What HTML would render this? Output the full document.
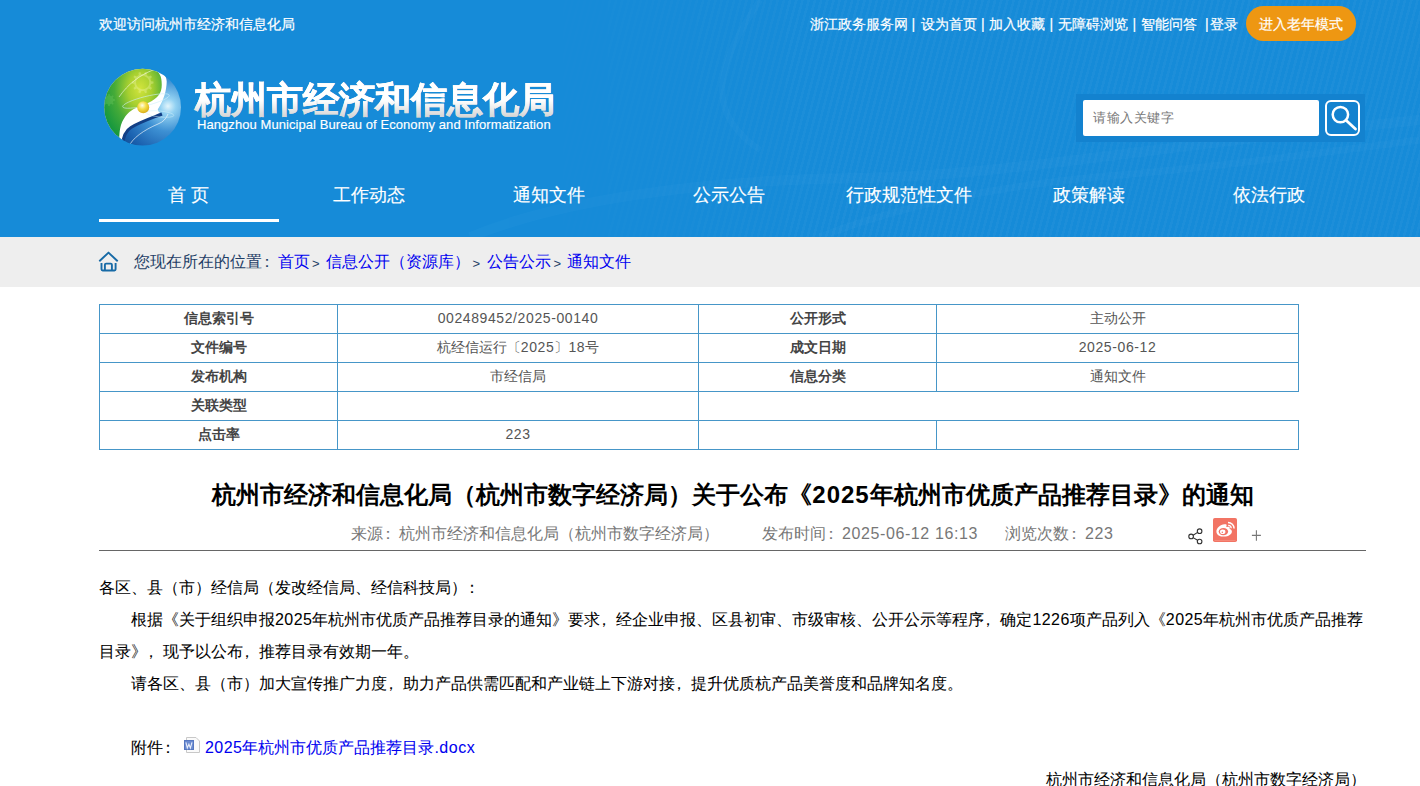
<!DOCTYPE html>
<html><head><meta charset="utf-8">
<style>
html,body{margin:0;padding:0;}
body{width:1420px;height:786px;overflow:hidden;position:relative;background:#fff;font-family:"Liberation Sans",sans-serif;color:#333;}
.a{position:absolute;white-space:nowrap;}
#hd{position:absolute;left:0;top:0;width:1420px;height:237px;background:#168bd8;overflow:hidden;}
.tl{position:absolute;white-space:nowrap;font-size:14px;color:#fff;line-height:20px;top:14px;-webkit-text-stroke:0.2px #fff;}
.nav{position:absolute;top:182px;width:180px;text-align:center;font-size:18px;line-height:26px;color:#fff;-webkit-text-stroke:0.15px #fff;}
#bc{position:absolute;left:0;top:237px;width:1420px;height:50px;background:#eeeeee;}
.bct{position:absolute;white-space:nowrap;font-size:16px;line-height:22px;color:#1f3e66;top:251px;}
.lk{color:#0000f0;}
.info{position:absolute;left:0;top:0;}
.hl{position:absolute;height:1px;background:#4696c8;}
.vl{position:absolute;width:1px;background:#4696c8;}
.cl{position:absolute;white-space:nowrap;font-size:14px;line-height:20px;font-weight:bold;color:#444;text-align:center;}
.cv{position:absolute;white-space:nowrap;font-size:14px;line-height:20px;color:#555;text-align:center;}
.d14{letter-spacing:0.6px;}
.d16{letter-spacing:0.45px;}
.m16{letter-spacing:0.6px;}
.meta{position:absolute;white-space:nowrap;font-size:16px;line-height:22px;color:#777;top:523px;}
.p{position:absolute;white-space:nowrap;font-size:16px;line-height:22px;color:#000;-webkit-text-stroke:0.05px currentColor;}
.cm{position:relative;left:-4px;}
.co{position:relative;left:-3.5px;}
</style></head><body>
<div id="hd">
  <div class="a" style="left:0;top:0;width:1420px;height:237px;background:repeating-linear-gradient(105deg,rgba(255,255,255,0.03) 0px,rgba(255,255,255,0.03) 2.5px,rgba(255,255,255,0) 2.5px,rgba(255,255,255,0) 6px);-webkit-mask-image:linear-gradient(90deg,transparent 0%,transparent 35%,#000 60%,#000 100%);"></div>
  <svg class="a" style="left:0;top:0;" width="1420" height="237" viewBox="0 0 1420 237">
    <g fill="none" stroke="#7cc6f5" opacity="0.045">
      <path d="M470 237 C560 200 700 180 860 178 C1000 176 1120 150 1420 120" stroke-width="10"/>
      <path d="M820 237 C900 205 1000 185 1120 175 C1240 165 1340 150 1420 140" stroke-width="7"/>
      <path d="M760 0 C720 60 700 110 760 150" stroke-width="6"/>
    </g>
  </svg>
  <div class="tl" id="wel" style="left:99px;">欢迎访问杭州市经济和信息化局</div>
  <div class="tl" id="t1" style="left:810px;">浙江政务服务网</div>
  <div class="tl" id="s1" style="left:911.5px;">|</div>
  <div class="tl" id="t2" style="left:921px;">设为首页</div>
  <div class="tl" id="s2" style="left:981px;">|</div>
  <div class="tl" id="t3" style="left:989px;">加入收藏</div>
  <div class="tl" id="s3" style="left:1049.5px;">|</div>
  <div class="tl" id="t4" style="left:1058px;">无障碍浏览</div>
  <div class="tl" id="s4" style="left:1132.5px;">|</div>
  <div class="tl" id="t5" style="left:1141px;">智能问答</div>
  <div class="tl" id="s5" style="left:1205px;">|</div>
  <div class="tl" id="t6" style="left:1210px;">登录</div>
  <div class="a" style="left:1246px;top:6px;width:110px;height:35px;border-radius:18px;background:#ee9712;"></div>
  <div class="tl" id="old" style="left:1259px;top:14px;">进入老年模式</div>

  <svg class="a" style="left:100px;top:64px;" width="86" height="86" viewBox="0 0 86 86">
    <defs>
      <radialGradient id="gG" cx="0.66" cy="0.3" r="0.62">
        <stop offset="0" stop-color="#d2e43c"/><stop offset="0.3" stop-color="#a8d030"/><stop offset="0.65" stop-color="#46ab38"/><stop offset="1" stop-color="#17983e"/>
      </radialGradient>
      <radialGradient id="gB" cx="0.79" cy="0.49" r="0.7">
        <stop offset="0" stop-color="#e2f5fc"/><stop offset="0.13" stop-color="#92d1f2"/><stop offset="0.42" stop-color="#3d90d3"/><stop offset="0.78" stop-color="#1b62b0"/><stop offset="1" stop-color="#0f4a92"/>
      </radialGradient>
      <radialGradient id="gY" cx="0.42" cy="0.35" r="0.7">
        <stop offset="0" stop-color="#fffde6"/><stop offset="0.45" stop-color="#f5df48"/><stop offset="1" stop-color="#d6a614"/>
      </radialGradient>
      <clipPath id="cc"><circle cx="42.6" cy="43.2" r="38.4"/></clipPath>
    </defs>
    <g clip-path="url(#cc)">
      <rect x="0" y="0" width="86" height="86" fill="url(#gB)"/>
      <path d="M-2 -2 H54 C62 6 67 12 66.7 18 C66.5 26 64 36 58 45 C57 47 60 49 62 50 C52 54 40 58 31 63.5 C25 67 22 74 22 88 H-2 Z" fill="#fff"/>
      <path d="M62 50 C52 54 40 58 31 63.5 C25 67 22 74 22 88" fill="none" stroke="#123f86" stroke-width="3"/>
      <path d="M-2 -2 H50 C56 6 61 10 61.3 15 C62 20 62.5 27 58 32 C54 37 44 41 36 44 C30 46.5 24 52 21 61 C19.5 66 19 72 19 88 H-2 Z" fill="url(#gG)"/>
      <path d="M51.10 17.27 L53.45 17.58 L53.45 19.62 L51.10 19.93 L50.27 22.46 L52.00 24.10 L50.80 25.74 L48.71 24.61 L46.56 26.17 L46.99 28.51 L45.06 29.14 L44.03 27.00 L41.37 27.00 L40.34 29.14 L38.41 28.51 L38.84 26.17 L36.69 24.61 L34.60 25.74 L33.40 24.10 L35.13 22.46 L34.30 19.93 L31.95 19.62 L31.95 17.58 L34.30 17.27 L35.13 14.74 L33.40 13.10 L34.60 11.46 L36.69 12.59 L38.84 11.03 L38.41 8.69 L40.34 8.06 L41.37 10.20 L44.03 10.20 L45.06 8.06 L46.99 8.69 L46.56 11.03 L48.71 12.59 L50.80 11.46 L52.00 13.10 L50.27 14.74 Z M42.7 12 A6.6 6.6 0 1 0 42.71 12 Z" fill="#eef7a8" fill-rule="evenodd" opacity="0.35"/>
      <path d="M13.41 35.12 L14.96 35.29 L14.96 36.71 L13.41 36.88 L12.74 38.50 L13.71 39.71 L12.71 40.71 L11.50 39.74 L9.88 40.41 L9.71 41.96 L8.29 41.96 L8.12 40.41 L6.50 39.74 L5.29 40.71 L4.29 39.71 L5.26 38.50 L4.59 36.88 L3.04 36.71 L3.04 35.29 L4.59 35.12 L5.26 33.50 L4.29 32.29 L5.29 31.29 L6.50 32.26 L8.12 31.59 L8.29 30.04 L9.71 30.04 L9.88 31.59 L11.50 32.26 L12.71 31.29 L13.71 32.29 L12.74 33.50 Z" fill="#7fd06a" opacity="0.3"/>
      <path d="M19 33 C28 20 40 11 53 6" fill="none" stroke="#ffffff" stroke-width="0.9" opacity="0.6"/>
      <path d="M28 84 C32 74 44 66 58 60 C63 58 66 55 68 50" fill="none" stroke="#ffffff" stroke-width="0.9" opacity="0.7"/>
      <ellipse cx="46" cy="37" rx="24" ry="4.5" transform="rotate(-14 46 37)" fill="none" stroke="#d0f0fa" stroke-width="0.8" opacity="0.7"/>
      <ellipse cx="60" cy="50" rx="14" ry="3" transform="rotate(6 60 50)" fill="none" stroke="#d0f0fa" stroke-width="0.8" opacity="0.6"/>
    </g>
    <circle cx="43.2" cy="43.2" r="6" fill="url(#gY)"/>
  </svg>
  <div class="a" id="logot" style="left:195px;top:78px;font-size:36px;line-height:44px;font-weight:bold;color:#d6d6d6;-webkit-text-stroke:0.5px #d6d6d6;">杭州市经济和信息化局</div>
  <div class="a" style="left:195px;top:78px;font-size:36px;line-height:44px;font-weight:bold;color:#fff;-webkit-text-stroke:0.5px #fff;-webkit-mask-image:linear-gradient(#000 0%,#000 50%,transparent 88%);mask-image:linear-gradient(#000 0%,#000 50%,transparent 88%);">杭州市经济和信息化局</div>
  <div class="a" id="loge" style="left:197px;top:117px;font-size:13px;line-height:16px;color:#fff;letter-spacing:0.07px;-webkit-text-stroke:0.15px #fff;">Hangzhou Municipal Bureau of Economy and Informatization</div>

  <div class="a" style="left:1076px;top:94px;width:289px;height:48px;background:#1382cf;"></div>
  <div class="a" style="left:1083px;top:100px;width:236px;height:36px;background:#fff;border-radius:2px;"></div>
  <div class="a" id="ph" style="left:1093px;top:107.5px;font-size:13px;letter-spacing:0.5px;line-height:20px;color:#777;">请输入关键字</div>
  <div class="a" style="left:1325px;top:100px;width:31px;height:32px;border:2px solid #fff;border-radius:6px;"></div>
  <svg class="a" style="left:1325px;top:100px;" width="35" height="36" viewBox="0 0 35 36">
    <circle cx="15.4" cy="14.6" r="7.7" fill="none" stroke="#fff" stroke-width="2.5"/>
    <line x1="21" y1="20.3" x2="30.5" y2="29" stroke="#fff" stroke-width="2.8" stroke-linecap="round"/>
  </svg>

  <div class="nav" id="n1" style="left:99px;">首 页</div>
  <div class="nav" id="n2" style="left:279px;">工作动态</div>
  <div class="nav" id="n3" style="left:459px;">通知文件</div>
  <div class="nav" id="n4" style="left:639px;">公示公告</div>
  <div class="nav" id="n5" style="left:819px;">行政规范性文件</div>
  <div class="nav" id="n6" style="left:999px;">政策解读</div>
  <div class="nav" id="n7" style="left:1179px;">依法行政</div>
  <div class="a" style="left:99px;top:219px;width:180px;height:3px;background:#fff;"></div>
</div>

<div id="bc"></div>
<svg class="a" style="left:97px;top:250px;" width="24" height="24" viewBox="0 0 24 24">
  <path d="M2.3 11.3 L11.5 2.6 L20.7 11.3" fill="none" stroke="#176aa6" stroke-width="1.9" stroke-linejoin="round"/>
  <path d="M4.5 13 V19.3 Q4.5 20.5 5.7 20.5 H17.4 Q18.6 20.5 18.6 19.3 V13 M7.9 20.5 V14.8 Q7.9 13.6 9.1 13.6 H13.7 Q14.9 13.6 14.9 14.8 V20.5" fill="none" stroke="#176aa6" stroke-width="1.9" stroke-linejoin="round"/>
</svg>
<div class="bct" id="b0" style="left:134px;">您现在所在的位置<span class="co">：</span></div>
<div class="bct lk" id="b1" style="left:277.5px;">首页</div>
<div class="bct" id="g1" style="left:312px;font-size:13px;top:253px;">&gt;</div>
<div class="bct lk" id="b2" style="left:326px;">信息公开（资源库）</div>
<div class="bct" id="g2" style="left:472.5px;font-size:13px;top:253px;">&gt;</div>
<div class="bct lk" id="b3" style="left:486.5px;">公告公示</div>
<div class="bct" id="g3" style="left:553.5px;font-size:13px;top:253px;">&gt;</div>
<div class="bct lk" id="b4" style="left:566.5px;">通知文件</div>

<!-- table lines -->
<div class="hl" style="left:99px;top:304px;width:1200px;"></div>
<div class="hl" style="left:99px;top:333px;width:1200px;"></div>
<div class="hl" style="left:99px;top:362px;width:1200px;"></div>
<div class="hl" style="left:99px;top:391px;width:1200px;"></div>
<div class="hl" style="left:99px;top:420px;width:1200px;"></div>
<div class="hl" style="left:99px;top:449px;width:1200px;"></div>
<div class="vl" style="left:99px;top:304px;height:146px;"></div>
<div class="vl" style="left:337px;top:304px;height:146px;"></div>
<div class="vl" style="left:698px;top:304px;height:146px;"></div>
<div class="vl" style="left:936px;top:304px;height:88px;"></div>
<div class="vl" style="left:936px;top:420px;height:30px;"></div>
<div class="vl" style="left:1298px;top:304px;height:88px;"></div>
<div class="vl" style="left:1298px;top:420px;height:30px;"></div>

<div class="cl" style="left:100px;width:237px;top:308px;">信息索引号</div>
<div class="cv" style="left:338px;width:360px;top:308px;"><span class="d14">002489452/2025-00140</span></div>
<div class="cl" style="left:699px;width:237px;top:308px;">公开形式</div>
<div class="cv" style="left:937px;width:361px;top:308px;">主动公开</div>
<div class="cl" style="left:100px;width:237px;top:337px;">文件编号</div>
<div class="cv" style="left:338px;width:360px;top:337px;">杭经信运行〔<span class="d14">2025</span>〕<span class="d14">18</span>号</div>
<div class="cl" style="left:699px;width:237px;top:337px;">成文日期</div>
<div class="cv" style="left:937px;width:361px;top:337px;"><span class="d14">2025-06-12</span></div>
<div class="cl" style="left:100px;width:237px;top:366px;">发布机构</div>
<div class="cv" style="left:338px;width:360px;top:366px;">市经信局</div>
<div class="cl" style="left:699px;width:237px;top:366px;">信息分类</div>
<div class="cv" style="left:937px;width:361px;top:366px;">通知文件</div>
<div class="cl" style="left:100px;width:237px;top:395px;">关联类型</div>
<div class="cl" style="left:100px;width:237px;top:424px;">点击率</div>
<div class="cv" style="left:338px;width:360px;top:424px;"><span class="d14">223</span></div>

<div class="a" id="title" style="left:99.5px;top:480px;width:1267px;text-align:center;font-size:24px;line-height:30px;font-weight:bold;color:#000;">杭州市经济和信息化局（杭州市数字经济局）关于公布《<span style="letter-spacing:1px">2025</span>年杭州市优质产品推荐目录》的通知</div>
<div class="meta" id="m1" style="left:351px;">来源<span class="co">：</span>杭州市经济和信息化局（杭州市数字经济局）</div>
<div class="meta" id="m2" style="left:762px;">发布时间<span class="co">：</span><span class="m16">2025-06-12 16:13</span></div>
<div class="meta" id="m3" style="left:1005px;">浏览次数<span class="co">：</span><span class="m16">223</span></div>
<svg class="a" style="left:1180px;top:512px;" width="90" height="40" viewBox="1180 512 90 40">
  <g fill="none" stroke="#333" stroke-width="1.1">
    <circle cx="1191.1" cy="536.4" r="2.3"/>
    <circle cx="1199.6" cy="531.2" r="2.3"/>
    <circle cx="1199.6" cy="541.5" r="2.3"/>
    <path d="M1193.1 535.2 L1197.6 532.4 M1193.1 537.6 L1197.6 540.3"/>
  </g>
  <rect x="1213" y="518" width="24" height="24" rx="1.8" fill="#f27464"/>
  <rect x="1214.5" y="540" width="21" height="0.8" fill="#fa9a8c" opacity="0.7"/>
  <path d="M1226 524.3 C1221 523.3 1216.4 527.8 1216.4 531.4 C1216.4 535 1220 536.6 1224 536.6 C1228.6 536.6 1231.9 534 1231.9 531.4 C1231.9 529.7 1230.6 529.1 1229.6 528.9 C1230.2 527.2 1229.2 526.2 1227.3 526.9 C1226.7 527.1 1226.3 527.1 1226.3 526.9 C1226.8 525.4 1226.6 524.4 1226 524.3 Z" fill="#fff"/>
  <ellipse cx="1223.4" cy="531.6" rx="4.7" ry="3.6" fill="#f27464"/>
  <ellipse cx="1222.7" cy="531.8" rx="2.7" ry="2.3" fill="#fff"/>
  <circle cx="1222.3" cy="532.3" r="0.75" fill="#f27464"/>
  <path d="M1228 522.4 A6.1 6.1 0 0 1 1234.1 528.5" fill="none" stroke="#fff" stroke-width="1.5"/>
  <path d="M1228.2 525.3 A3 3 0 0 1 1231.2 528.3" fill="none" stroke="#fff" stroke-width="1.3"/>
  <path d="M1256.4 530.2 V540.8 M1251.9 535.4 H1260.9" stroke="#777" stroke-width="1.1"/>
</svg>
<svg class="a" style="left:180px;top:733px;" width="24" height="24" viewBox="180 733 24 24">
  <path d="M186.5 737.5 H196 L199.5 741 V752.5 H186.5 Z" fill="#fafafa" stroke="#c8c8c8" stroke-width="1"/>
  <rect x="184.5" y="740.5" width="9" height="9" fill="#6a8ad0" stroke="#5577c0" stroke-width="1"/>
  <path d="M185.9 742.4 L187.3 748 L188.9 744.2 L190.4 748 L192 742.4" fill="none" stroke="#e8eefa" stroke-width="1.1"/>
</svg>
<div class="a" style="left:99px;top:550px;width:1267px;height:1px;background:#666;"></div>

<div class="p" id="p1" style="left:99px;top:577px;">各区、县（市）经信局（发改经信局、经信科技局）<span class="co">：</span></div>
<div class="p" id="p2" style="left:131px;top:609px;">根据《关于组织申报<span class="d16">2025</span>年杭州市优质产品推荐目录的通知》要求<span class="cm">，</span>经企业申报、区县初审、市级审核、公开公示等程序<span class="cm">，</span>确定<span class="d16">1226</span>项产品列入《<span class="d16">2025</span>年杭州市优质产品推荐</div>
<div class="p" id="p3" style="left:99px;top:641px;">目录》<span class="cm">，</span>现予以公布<span class="cm">，</span>推荐目录有效期一年。</div>
<div class="p" id="p4" style="left:131px;top:673px;">请各区、县（市）加大宣传推广力度<span class="cm">，</span>助力产品供需匹配和产业链上下游对接<span class="cm">，</span>提升优质杭产品美誉度和品牌知名度。</div>
<div class="p" id="att" style="left:131px;top:737px;">附件<span class="co">：</span></div>
<div class="p" id="attl" style="left:205px;top:737px;color:#0000f0;"><span class="d16">2025</span>年杭州市优质产品推荐目录<span style="letter-spacing:0.5px">.docx</span></div>
<div class="p" id="sig" style="left:1046px;top:768.5px;">杭州市经济和信息化局（杭州市数字经济局）</div>
</body></html>
